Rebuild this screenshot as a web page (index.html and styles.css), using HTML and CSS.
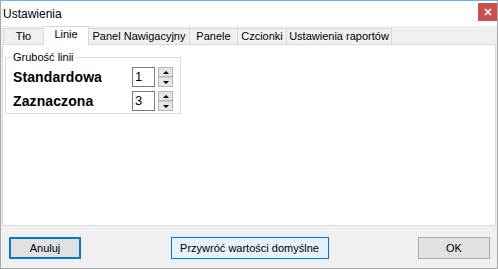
FILE: index.html
```html
<!DOCTYPE html>
<html lang="pl">
<head>
    <meta charset="UTF-8">
    <title>Ustawienia</title>
    <link rel="stylesheet" href="styles.css">
</head>
<body>
    <div class="window">
        <!-- Pasek tytułu -->
        <div class="titlebar">
            <span class="title">Ustawienia</span>
            <span class="close">
                <svg width="8" height="8" viewBox="0 0 8 8">
                    <path d="M1 1 L7 7 M7 1 L1 7" stroke="#fff" stroke-width="1.6"/>
                </svg>
            </span>
        </div>

        <!-- Zakładki -->
        <div class="tabs">
            <div class="tab tab-tlo">Tło</div>
            <div class="tab tab-linie active">Linie</div>
            <div class="tab tab-nav">Panel Nawigacyjny</div>
            <div class="tab tab-panele">Panele</div>
            <div class="tab tab-czcionki">Czcionki</div>
            <div class="tab tab-raporty">Ustawienia raportów</div>
        </div>

        <div class="panel">
            <div class="group">
                <span class="group-title">Grubość linii</span>
                <div class="row">
                    <span class="label">Standardowa</span>
                    <div class="spin">
                        <div class="spin-value">1</div>
                        <div class="spin-buttons">
                            <div class="spin-btn"><span class="arrow-up"></span></div>
                            <div class="spin-btn"><span class="arrow-down"></span></div>
                        </div>
                    </div>
                </div>
                <div class="row">
                    <span class="label">Zaznaczona</span>
                    <div class="spin">
                        <div class="spin-value">3</div>
                        <div class="spin-buttons">
                            <div class="spin-btn"><span class="arrow-up"></span></div>
                            <div class="spin-btn"><span class="arrow-down"></span></div>
                        </div>
                    </div>
                </div>
            </div>
        </div>

        <!-- Przyciski -->
        <div class="footer">
            <button class="btn btn-focus">Anuluj</button>
            <button class="btn btn-hover">Przywróć wartości domyślne</button>
            <button class="btn">OK</button>
        </div>
    </div>
</body>
</html>
```

FILE: styles.css
```css
body {
    margin: 0;
    font-family: "Liberation Sans", Arial, sans-serif;
    color: #000;
    background: #fff;
}

.window {
    width: 498px;
    height: 269px;
    box-sizing: border-box;
    border: 1px solid #a8a8a8;
    border-top-color: #6cb4ea; /* aktywne okno */
    background-color: #f0f0f0;
    display: flex;
    flex-direction: column;
}

/* Pasek tytułu */
.titlebar {
    height: 25px;
    background-color: #fff;
    display: flex;
    align-items: flex-start;
    justify-content: space-between;
}

.title {
    font-size: 12px;
    line-height: 12px;
    margin: 7px 0 0 2px;
}

.close {
    width: 19px;
    height: 18px;
    margin-top: 2px;
    background-color: #c75050;
    display: flex;
    align-items: center;
    justify-content: center;
}

/* Zakładki */
.tabs {
    height: 18px;
    display: flex;
    align-items: flex-end;
    padding-left: 2px;
    position: relative;
    z-index: 1;
}

.tab {
    height: 16px;
    box-sizing: border-box;
    border: 1px solid #d9d9d9;
    border-bottom: none;
    border-right: none;
    font-size: 11px;
    line-height: 15px;
    text-align: center;
    background-color: #f0f0f0;
}

.tab-tlo { width: 40px; }
.tab-nav { width: 100px; }
.tab-panele { width: 48px; }
.tab-czcionki { width: 49px; }
.tab-raporty { width: 106px; border-right: 1px solid #d9d9d9; }

.tab.active {
    width: 46px;
    height: 19px;
    margin-bottom: -1px;
    background-color: #fff;
    border-right: 1px solid #d9d9d9;
    line-height: 15px;
}

.tab.active + .tab {
    border-left: none;
}

/* Panel z zawartością */
.panel {
    height: 182px;
    box-sizing: border-box;
    margin: 0 1px 11px 1px;
    border: 1px solid #d9d9d9;
    background-color: #fff;
    padding: 12px 0 0 2px;
}

.group {
    position: relative;
    width: 176px;
    height: 57px;
    box-sizing: border-box;
    border: 1px solid #dcdcdc;
    padding: 9px 0 0 7px;
    display: flex;
    flex-direction: column;
    gap: 4px;
}

.group-title {
    position: absolute;
    top: -8px;
    left: 6px;
    padding: 0 1px;
    background-color: #fff;
    font-size: 11px;
    line-height: 14px;
}

.row {
    display: flex;
    align-items: center;
    height: 20px;
}

.label {
    width: 119px;
    font-size: 14px;
    font-weight: bold;
    letter-spacing: 0.1px;
}

.spin {
    display: flex;
    align-items: stretch;
    height: 20px;
}

.spin-value {
    width: 23px;
    box-sizing: border-box;
    border: 1px solid #7a7a7a;
    font-size: 13px;
    line-height: 18px;
    padding-left: 2px;
}

.spin-buttons {
    margin-left: 3px;
    width: 15px;
    display: flex;
    flex-direction: column;
}

.spin-btn {
    flex: 1;
    box-sizing: border-box;
    border: 1px solid #b5b5b5;
    background-color: #e6e6e6;
    display: flex;
    align-items: center;
    justify-content: center;
}

.spin-btn + .spin-btn {
    border-top-color: #cfcfcf;
}

.arrow-up {
    width: 0;
    height: 0;
    border-left: 3px solid transparent;
    border-right: 3px solid transparent;
    border-bottom: 3px solid #000;
}

.arrow-down {
    width: 0;
    height: 0;
    border-left: 3px solid transparent;
    border-right: 3px solid transparent;
    border-top: 3px solid #000;
}

/* Stopka z przyciskami */
.footer {
    display: flex;
    justify-content: space-between;
    padding: 0 7px 0 8px;
}

.btn {
    height: 22px;
    width: 72px;
    box-sizing: border-box;
    border: 1px solid #adadad;
    background-color: #e1e1e1;
    font-family: "Liberation Sans", Arial, sans-serif;
    font-size: 11px;
    color: #000;
    padding: 0;
}

.btn-focus {
    border: 2px solid #0078d7;
}

.btn-hover {
    width: 158px;
    border-color: #0078d7;
    background-color: #e5f1fb;
}
```
